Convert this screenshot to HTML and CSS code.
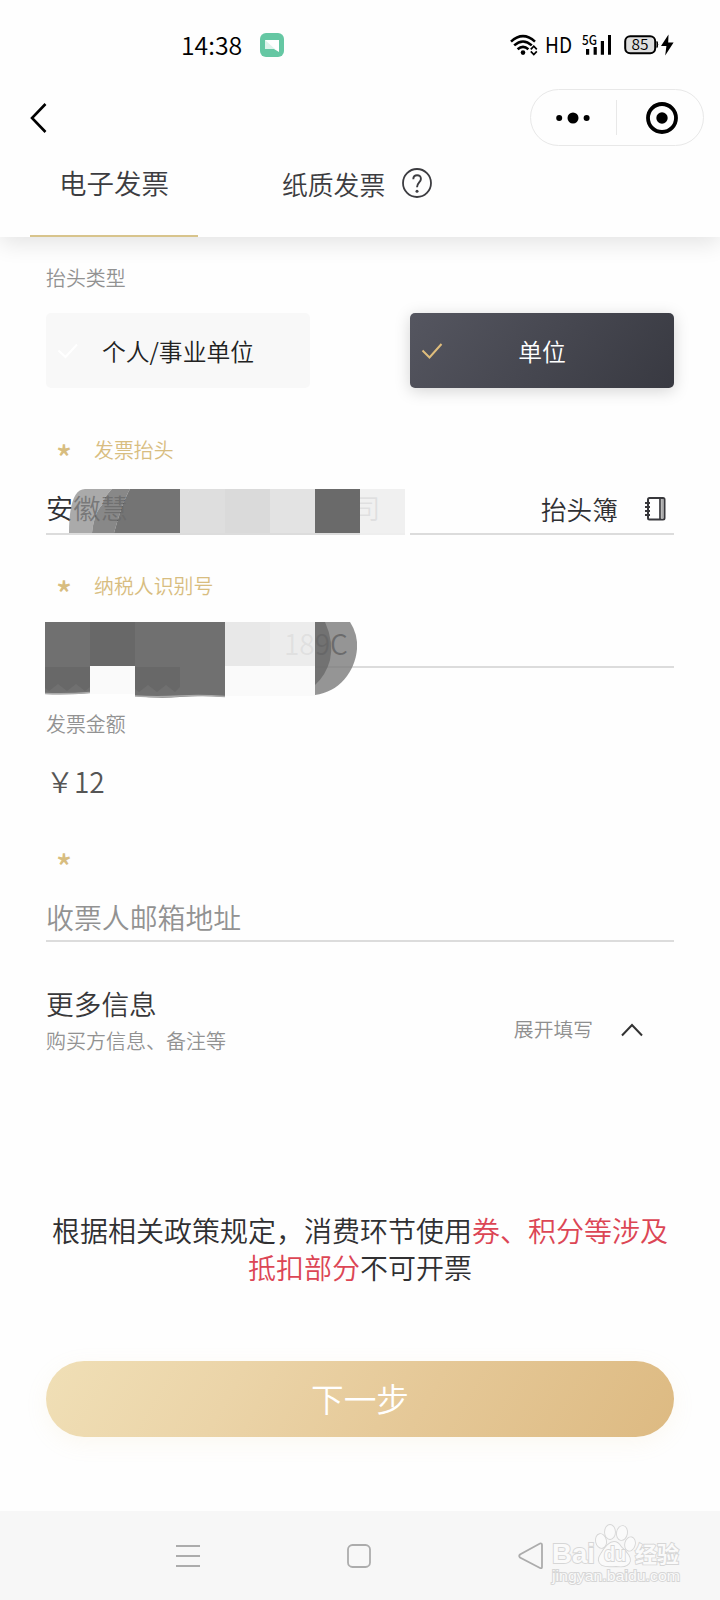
FILE: index.html
```html
<!DOCTYPE html>
<html lang="zh-CN">
<head>
<meta charset="utf-8">
<title>电子发票</title>
<link rel="stylesheet" href="styles.css">
</head>
<body>
<div class="screen">
  <header class="header">
    <div class="status">
      <div class="status-left">
        <span class="clock">14:38</span>
        <svg class="app-badge" width="24" height="24" viewBox="0 0 24 24"><rect width="24" height="24" rx="6" fill="#65c7a3"/><path d="M5 7h14v12l-5-3H5z" fill="#fff"/><path d="M5 7l10 9H5z" fill="#dff3ec"/></svg>
      </div>
      <svg class="status-right" width="166" height="40" viewBox="0 -8 166 40">
        <g fill="none" stroke="#000" stroke-width="2.6">
          <path d="M1 7.6Q13 -3.2 25 7.6"/><path d="M4.2 11.4Q13 3.6 21.8 11.4"/><path d="M7.6 15.2Q13 10.6 18.4 15.2"/>
        </g>
        <circle cx="13" cy="18.6" r="2.3"/>
        <path d="M20.8 15.4l3-3.2 3 3.2M20.8 17.4l3 3.2 3-3.2" fill="none" stroke="#000" stroke-width="1.7"/>
        <text x="35" y="19" class="hd" textLength="27" lengthAdjust="spacingAndGlyphs">HD</text>
        <text x="72" y="10.600" class="net" textLength="15" lengthAdjust="spacingAndGlyphs">5G</text>
        <path d="M76 15h3.2v5.8H76zM83.600 13h3.200v7.800h-3.200zM90.800 7h3.200v13.800h-3.200zM98 1h3v19.800h-3z"/>
        <rect x="115.200" y="2.200" width="30" height="17" rx="5" fill="#dedede" stroke="#000" stroke-width="2"/>
        <path d="M147 7.500q1.500 3 0 6z" stroke="#000"/>
        <text x="121.500" y="16.200" class="batt" textLength="17" lengthAdjust="spacingAndGlyphs">85</text>
        <path d="M158.500 0.500L151 12h5.400l-1.200 9.400L163.600 8.500h-5.400z"/>
      </svg>
    </div>
    <nav class="nav">
      <svg width="18" height="32" viewBox="0 0 18 32"><path d="M16.500 2L3 16l13.500 14" fill="none" stroke="#000" stroke-width="2.600"/></svg>
      <div class="capsule">
        <svg width="34" height="12" viewBox="0 0 34 12"><circle cx="3.200" cy="6" r="3"/><circle cx="17" cy="6" r="5.500"/><circle cx="30.600" cy="6" r="3"/></svg>
        <span class="divider"></span>
        <svg width="32" height="32" viewBox="0 0 32 32"><circle cx="16" cy="16" r="14" fill="none" stroke="#000" stroke-width="3.800"/><circle cx="16" cy="16" r="5.700"/></svg>
      </div>
    </nav>
    <div class="tabs">
      <div class="tab active">电子发票</div>
      <div class="tab paper">纸质发票
        <svg width="30" height="30" viewBox="0 0 30 30"><circle cx="15" cy="15" r="14" fill="none" stroke="#3c3c40" stroke-width="1.800"/><path d="M11.300 11.200Q11.300 7.200 15.100 7.200T18.900 10.900C18.900 14.200 15 14.800 15 19.200" fill="none" stroke="#3c3c40" stroke-width="1.900"/><circle cx="15" cy="23.300" r="1.500" fill="#3c3c40"/></svg>
      </div>
    </div>
  </header>

  <main class="form">
    <div class="label">抬头类型</div>
    <div class="choices">
      <div class="choice"><svg width="22" height="18" viewBox="0 0 22 18"><path d="M1.500 8.500l7 6.500L20 2.500" fill="none" stroke="#fff" stroke-width="2"/></svg><span>个人/事业单位</span></div>
      <div class="choice selected"><svg width="22" height="18" viewBox="0 0 22 18"><path d="M1.500 8.500l7 7L20.500 2" fill="none" stroke="#dfbd7c" stroke-width="2"/></svg><span>单位</span></div>
    </div>

    <div class="label gold title-label"><i class="star">*</i>发票抬头</div>
    <div class="title-row">
      <div class="field name-field">安徽慧<span class="tail">司</span>
        <svg class="mask-name" width="340" height="46" viewBox="0 0 340 46">
          <path d="M1 44C1 20 5 0 17 0H44Q36 8 34 16 26 24 24 44z" fill="#8f8f8f" fill-opacity=".76"/>
          <path d="M24 44Q26 24 34 16 36 8 44 0H62Q54 14 46 44z" fill="#777" fill-opacity=".88"/>
          <path d="M46 44Q54 14 62 0h50v44z" fill="#6e6e6e" fill-opacity=".96"/>
          <path d="M112 0h45v44h-45z" fill="#dedede"/><path d="M157 0h45v44h-45z" fill="#dadada"/><path d="M202 0h45v44h-45z" fill="#e3e3e3"/>
          <path d="M247 0h45v44h-45z" fill="#6a6a6a"/><path d="M292 0h45v46h-45z" fill="#efefef" fill-opacity=".92"/>
        </svg>
      </div>
      <div class="field book-field">抬头簿
        <svg width="22" height="26" viewBox="0 0 22 26"><rect x="4" y="2" width="16.500" height="21.500" rx="1.500" fill="none" stroke="#38383c" stroke-width="2"/><path d="M16 2v21.500" stroke="#38383c" stroke-width="1.700"/><path d="M18.200 3v20" stroke="#aaa" stroke-width="2"/><path d="M1 7h5M1 11h5M1 15h5M1 19h5" stroke="#38383c" stroke-width="1.800"/></svg>
      </div>
    </div>

    <div class="label gold tax-label"><i class="star">*</i>纳税人识别号</div>
    <div class="field tax-field">189C
      <svg class="mask-tax" width="316" height="78" viewBox="0 0 316 78">
        <path d="M0 0h180v75q-22-2-45 0-22 2-45-1V44H45v27q-22 2-45 1z" fill="#707070"/>
        <path d="M45 0h45v44H45zM0 45h45v20l-5 4-9-7-9 7-9-7-9 7-4-3zM90 45h45v20l-5 5-9-7-9 7-9-7-9 7-4-3z" fill="#686868"/>
        <path d="M0 71.500q22 1 45-1M90 74q22 1.500 45 0 22-1 45 .5" fill="none" stroke="#aaa" stroke-width="1.500"/>
        <path d="M45 44h45v28H45zM180 44h90v30h-90z" fill="#fafafa"/>
        <path d="M180 0h45v44h-45z" fill="#e8e8e8"/>
        <path d="M225 0h45v44h-45z" fill="#ebebeb" fill-opacity=".94"/>
        <path d="M270 0h35Q313 12 312 27C310 50 294 70 270 73z" fill="#7b7b7b" fill-opacity=".8"/>
        <path d="M270 0h10Q289 20 285 38 281 53 270 63z" fill="#676767" fill-opacity=".76"/>
      </svg>
    </div>

    <div class="label amount-label">发票金额</div>
    <div class="amount">￥12</div>
    <div class="label gold mail-label"><i class="star">*</i></div>
    <div class="field mail-field">收票人邮箱地址</div>

    <section class="more">
      <div><div class="more-title">更多信息</div><div class="more-sub">购买方信息、备注等</div></div>
      <div class="expand">展开填写
        <svg width="22" height="14" viewBox="0 0 22 14"><path d="M1 12.500L11 2l10 10.500" fill="none" stroke="#333" stroke-width="2"/></svg>
      </div>
    </section>

    <p class="notice">根据相关政策规定，消费环节使用<span>券、积分等涉及<br>抵扣部分</span>不可开票</p>
    <div class="next">下一步</div>
  </main>

  <footer class="sysbar">
    <svg width="24" height="24" viewBox="0 0 24 24"><path d="M0 2h24M0 12h24M0 22h24" stroke="#acacac" stroke-width="1.800"/></svg>
    <svg width="24" height="24" viewBox="0 0 24 24"><rect x="1" y="1" width="22" height="22" rx="4.500" fill="none" stroke="#acacac" stroke-width="1.800"/></svg>
    <svg width="26" height="28" viewBox="0 0 26 28"><path d="M22 1.500L2 12.500Q.5 14 2 15.500L22 26q2 .7 2-1V3q0-2-2-1.500z" fill="none" stroke="#acacac" stroke-width="1.800"/></svg>
    <svg class="watermark" width="140" height="70" viewBox="0 0 140 70">
      <g fill="#fafafa" stroke="#d6d6d6" stroke-width="1.800" paint-order="stroke">
        <text x="4" y="39.500" class="wm-bai" textLength="43" lengthAdjust="spacingAndGlyphs">Bai</text>
        <ellipse cx="53" cy="18" rx="5" ry="7" transform="rotate(-12 53 18)"/><ellipse cx="62" cy="9" rx="5" ry="7"/><ellipse cx="74" cy="10" rx="5" ry="7" transform="rotate(10 74 10)"/><ellipse cx="82" cy="21" rx="4.800" ry="6.800" transform="rotate(15 82 21)"/>
        <path d="M66 19q4 0 7 5 10 9 9 14-2 7-14 5-10 1-14-1-6-4-1-11Q60 19 66 19z"/>
        <text x="56" y="38" class="wm-du" textLength="22" lengthAdjust="spacingAndGlyphs">du</text>
        <text x="87" y="38.500" class="wm-cn">经验</text>
        <text x="4" y="58" class="wm-url" textLength="128" lengthAdjust="spacingAndGlyphs">jingyan.baidu.com</text>
      </g>
    </svg>
  </footer>
</div>
</body>
</html>
```
FILE: styles.css
```css
* { box-sizing: border-box; }
body {
  margin: 0;
  font-family: "Noto Sans CJK SC", "Noto Sans", sans-serif;
  font-weight: 350;
  background: #fefefe;
}
svg { display: block; flex: none; }
.screen { width: 720px; height: 1600px; display: flex; flex-direction: column; background: #fefefe; overflow: hidden; }

.header { height: 237px; flex: none; background: #fefefe; box-shadow: 0 6px 22px rgba(0, 0, 0, .11); }
.status { height: 89px; padding: 0 44px 0 181px; display: flex; justify-content: space-between; align-items: center; }
.status-left { display: flex; align-items: center; gap: 18px; }
.clock { font-size: 24.800px; line-height: 28px; color: #000; padding-bottom: 2px; }
.status-right { font-family: "Noto Sans CJK SC", sans-serif; font-weight: 400; margin-top: 2px; }
.hd { font-size: 22px; }
.net { font-size: 13px; font-weight: 500; }
.batt { font-size: 15px; font-weight: 350; }
.nav { height: 57px; padding: 0 16px 0 29px; display: flex; justify-content: space-between; align-items: center; }
.capsule { width: 174px; height: 57px; padding: 0 25px; border: 1.500px solid #e8e8e8; border-radius: 29px; display: flex; align-items: center; }
.divider { flex: none; width: 1px; height: 35px; background: #e8e8e8; margin: 0 29px 0 26px; }
.tabs { height: 91px; padding-left: 30px; display: flex; color: #3c3c40; line-height: 73px; }
.tab { height: 91px; }
.active { width: 168px; text-align: center; font-size: 27.500px; border-bottom: 2px solid #d8c48c; }
.paper { margin-left: 84px; display: flex; gap: 17px; font-size: 25.800px; line-height: 75px; }
.paper svg { margin-top: 22px; }

.form { flex: 1; padding: 0 46px; display: flex; flex-direction: column; }
.label { height: 30px; line-height: 30px; font-size: 19.900px; color: #929292; margin-top: 26px; flex: none; }
.choices { display: flex; justify-content: space-between; margin-top: 20px; }
.choice { width: 264px; height: 75px; border-radius: 5px; background: #f8f8f8; color: #222; display: flex; align-items: center; padding-left: 11px; font-size: 23.800px; line-height: 75px; }
.choice span { flex: 1; text-align: center; padding-right: 33px; }
.selected { color: #fff; background: linear-gradient(130deg, #555660, #383941); box-shadow: 0 3px 16px rgba(0, 0, 0, .17); }
.gold { color: #d8bd80; display: flex; }
.star { width: 48px; padding-left: 10px; font-style: normal; font-weight: 500; font-size: 33px; line-height: 44px; }
.title-label { margin-top: 47px; }
.title-row { display: flex; justify-content: space-between; margin-top: 24px; }
.field { position: relative; height: 46px; border-bottom: 2px solid #dcdcdc; color: #303033; font-size: 27.300px; line-height: 37px; flex: none; }
.name-field { width: 359px; }
.tail { margin-left: 225px; }
.mask-name { position: absolute; left: 22px; top: 0; }
.book-field { width: 264px; padding: 0 8px 0 131px; display: flex; justify-content: space-between; font-size: 25.600px; line-height: 39px; }
.book-field svg { margin-top: 7px; }
.tax-label { margin-top: 36px; }
.tax-field { margin-top: 21px; padding-left: 238px; font-size: 28px; line-height: 42px; }
.mask-tax { position: absolute; left: -1px; top: 0; }
.amount-label { margin-top: 41px; }
.amount { height: 40px; line-height: 40px; font-size: 28px; color: #555; margin-top: 22px; }
.mail-label { margin-top: 43px; }
.mail-field { margin-top: 22px; line-height: 43px; font-size: 27.900px; color: #929292; }
.more { height: 80px; margin-top: 42px; display: flex; justify-content: space-between; }
.more-title { font-size: 27.700px; line-height: 38px; color: #38383a; }
.more-sub { font-size: 20px; line-height: 37px; color: #929292; }
.expand { display: flex; gap: 28px; padding-right: 31px; font-size: 19.800px; line-height: 90px; color: #8e8e8e; }
.expand svg { margin-top: 39px; }
.notice { margin: 148px -10px 0; text-align: center; font-size: 28px; line-height: 37px; color: #303032; }
.notice span { color: #dc4655; }
.next { height: 76px; margin-top: 75px; border-radius: 38px; text-align: center; line-height: 74px; font-size: 32.700px; color: #fff; background: linear-gradient(120deg, #f0dfb6, #ebd4a8 30%, #e5c897 60%, #ddba82); box-shadow: 0 6px 22px rgba(226, 196, 130, .1); flex: none; }

.sysbar { position: relative; height: 89px; flex: none; background: #f7f7f7; display: flex; justify-content: space-between; align-items: center; padding: 0 176px; }
.watermark { position: absolute; left: 548px; top: 12px; }
.wm-bai { font: 700 27px "Liberation Sans", sans-serif; }
.wm-du { font: 700 20px "Liberation Sans", sans-serif; }
.wm-cn { font: 700 22px "Noto Sans CJK SC", sans-serif; }
.wm-url { font: 400 14.500px "Liberation Sans", sans-serif; }
```
